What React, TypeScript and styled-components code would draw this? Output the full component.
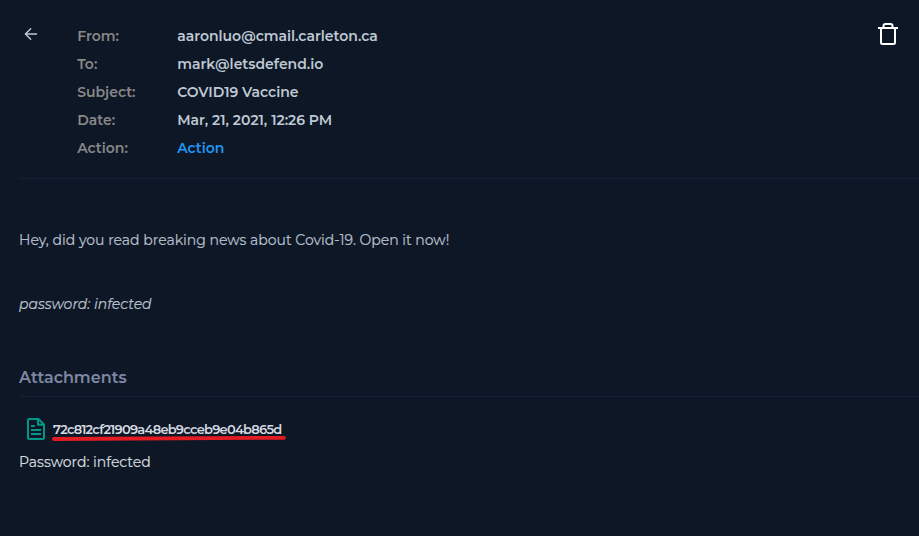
import React from "react";
import styled, { createGlobalStyle } from "styled-components";

const GlobalStyle = createGlobalStyle`
  * { box-sizing: border-box; }
  body { margin: 0; background: #0e1726; }
`;

const Page = styled.main`
  display: flex;
  flex-direction: column;
  width: 919px;
  height: 536px;
  overflow: hidden;
  padding-left: 19px;
  background: #0e1726;
  font-family: Montserrat, Inter, "Liberation Sans", sans-serif;
  font-size: 14px;
  color: #bfc9d4;
`;

const Header = styled.header`
  display: flex;
  align-items: flex-start;
  height: 179px;
  padding-top: 22px;
  border-bottom: 1px solid #191e3a;
`;

const IconButton = styled.button<{ $width: number; $top?: number }>`
  display: flex;
  width: ${(p) => p.$width}px;
  padding: 0;
  margin-top: ${(p) => p.$top ?? 0}px;
  border: 0;
  background: none;
  color: inherit;
`;

const Details = styled.dl`
  flex: 1;
  display: grid;
  grid-template-columns: 100px 1fr;
  grid-auto-rows: 28px;
  align-items: center;
  margin: 0;
  padding-left: 0.2px;
  font-weight: 600;
`;

const Label = styled.dt`
  color: #888;
`;

const Value = styled.dd<{ $link?: boolean }>`
  margin: 0;
  color: ${(p) => (p.$link ? "#2196f3" : "#bfc9d4")};
`;

const Paragraph = styled.p<{ $top: number; $italic?: boolean; $bright?: boolean }>`
  width: max-content;
  margin: ${(p) => p.$top}px 0 0;
  line-height: 20px;
  font-style: ${(p) => (p.$italic ? "italic" : "normal")};
  -webkit-text-stroke: 0.2px currentColor;
  color: ${(p) => (p.$bright ? "#d3d8de" : "#b5bfca")};
`;

const SectionTitle = styled.h2`
  height: 29px;
  margin: 54px 0 0;
  border-bottom: 1px solid #191e3a;
  font-size: 16px;
  font-weight: 600;
  line-height: 20px;
  color: #7f88a3;
`;

const Attachment = styled.div`
  display: flex;
  align-items: flex-start;
  height: 31px;
  margin-top: 20px;
  padding-left: 8px;
`;

const FileLink = styled.div`
  display: flex;
  flex-direction: column;
  margin: 4px 0 0 7px;
`;

const FileName = styled.span`
  width: max-content;
  height: 14px;
  font-size: 13px;
  font-weight: 600;
  line-height: 16px;
  letter-spacing: -0.73px;
  color: #d5dae1;
`;

const Underline = styled.svg`
  display: block;
  width: 234px;
  height: 6px;
  margin-left: -1px;
`;

const details = [
  { label: "From:", value: "aaronluo@cmail.carleton.ca" },
  { label: "To:", value: "mark@letsdefend.io" },
  { label: "Subject:", value: "COVID19 Vaccine" },
  { label: "Date:", value: "Mar, 21, 2021, 12:26 PM" },
  { label: "Action:", value: "Action", link: true },
];

export default function App() {
  return (
    <>
      <GlobalStyle />
      <Page>
        <Header>
          <IconButton $width={58} $top={5} aria-label="Back">
            <svg width="24" height="14" viewBox="0 0 24 14" fill="none" stroke="#bfc9d4" strokeWidth="1.4" strokeLinecap="round" strokeLinejoin="round">
              <path d="M17.5 7H6.5M11.7 1.7L6.4 7l5.3 5.3" />
            </svg>
          </IconButton>
          <Details>
            {details.map((d) => (
              <React.Fragment key={d.label}>
                <Label>{d.label}</Label>
                <Value $link={d.link}>{d.value}</Value>
              </React.Fragment>
            ))}
          </Details>
          <IconButton $width={42} aria-label="Delete">
            <svg width="22" height="24" viewBox="0 0 22 24" fill="none" stroke="#fff" strokeWidth="2">
              <path d="M1 6h20M6.5 5.5V4q0-2 2-2h5q2 0 2 2v1.500M4 6v14.500q0 1.500 1.500 1.500h11q1.500 0 1.500-1.500V6" />
            </svg>
          </IconButton>
        </Header>
        <Paragraph $top={51}>Hey, did you read breaking news about Covid-19. Open it now!</Paragraph>
        <Paragraph $top={44} $italic>password: infected</Paragraph>
        <SectionTitle>Attachments</SectionTitle>
        <Attachment>
          <svg width="19" height="24" viewBox="0 0 19 24" fill="none" stroke="#009688" strokeWidth="2" strokeLinejoin="round">
            <path d="M11.500 2H2.500A1.500 1.500 0 0 0 1 3.500v17A1.500 1.500 0 0 0 2.500 22h13a1.500 1.500 0 0 0 1.500-1.500V7.500zM11 2v5.800H17M14 13H4M14 17H4M8 9H4" />
          </svg>
          <FileLink>
            <FileName>72c812cf21909a48eb9cceb9e04b865d</FileName>
            <Underline viewBox="0 0 234 6" fill="none">
              <path d="M2 4L232 2.800" stroke="#e31b23" strokeWidth="3.800" strokeLinecap="round" />
            </Underline>
          </FileLink>
        </Attachment>
        <Paragraph $top={4} $bright>Password: infected</Paragraph>
      </Page>
    </>
  );
}
